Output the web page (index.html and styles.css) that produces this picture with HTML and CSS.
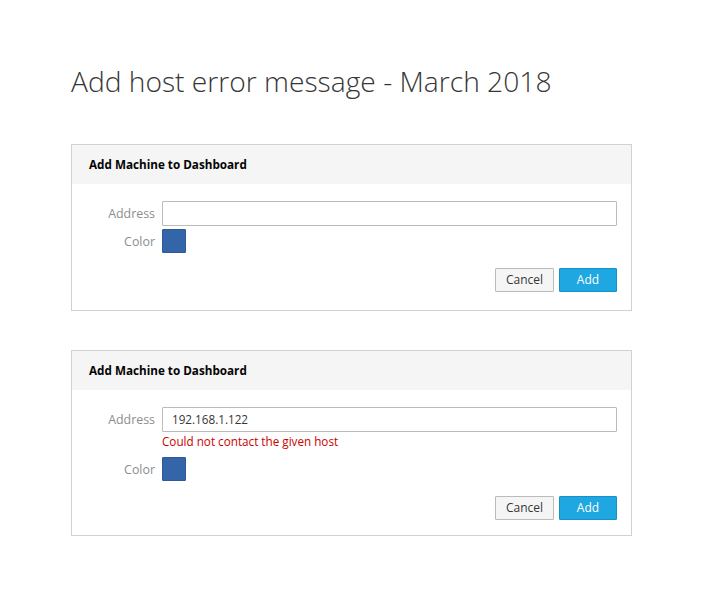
FILE: index.html
```html
<!DOCTYPE html>
<html>
<head>
<meta charset="utf-8">
<link rel="stylesheet" href="styles.css">
</head>
<body>
<main class="page">
  <h1 class="title">Add host error message - March 2018</h1>

  <section class="card">
    <header class="card-head">Add Machine to Dashboard</header>
    <div class="card-body">
      <div class="form">
        <label class="label">Address</label>
        <div class="field"><div class="input"></div></div>
        <label class="label">Color</label>
        <div class="field"><div class="swatch"></div></div>
      </div>
      <div class="actions">
        <button class="btn btn-default">Cancel</button>
        <button class="btn btn-primary">Add</button>
      </div>
    </div>
  </section>

  <section class="card">
    <header class="card-head">Add Machine to Dashboard</header>
    <div class="card-body card-body-tight">
      <div class="form">
        <label class="label">Address</label>
        <div class="field">
          <div class="input">192.168.1.122</div>
          <div class="error">Could not contact the given host</div>
        </div>
        <label class="label label-swatch">Color</label>
        <div class="field"><div class="swatch"></div></div>
      </div>
      <div class="actions">
        <button class="btn btn-default">Cancel</button>
        <button class="btn btn-primary">Add</button>
      </div>
    </div>
  </section>
</main>
</body>
</html>
```

FILE: styles.css
```css
* { box-sizing: border-box; }
html, body { margin: 0; padding: 0; background: #fff; }
body { font-family: "Open Sans", "Noto Sans", sans-serif; color: #363636; }

.page {
  width: 561px;
  margin-left: 71px;
  padding-top: 61px;
}

.title {
  margin: 0 0 43px 0;
  font-weight: 300;
  font-size: 28.2px;
  line-height: 40px;
  color: #363636;
}

.card {
  border: 1px solid #d1d1d1;
  margin-bottom: 39px;
}

.card-head {
  background: #f5f5f5;
  height: 39px;
  padding-left: 17px;
  font-size: 11.7px;
  font-weight: 700;
  line-height: 39px;
  color: #030303;
}

.card-body {
  padding: 17px 14px 18px 17px;
}
.card-body-tight { padding-bottom: 15px; }

.form {
  display: grid;
  grid-template-columns: 66px 1fr;
  column-gap: 7px;
  row-gap: 3px;
}

.label {
  text-align: right;
  font-size: 12.4px;
  line-height: 25px;
  color: #8b8d8f;
}
.label-swatch { line-height: 25px; }

.input {
  height: 25px;
  border: 1px solid #bbbbbb;
  border-radius: 1px;
  padding: 0 9px;
  font-size: 11.7px;
  line-height: 23px;
  color: #363636;
}

.error {
  padding: 1px 0 4px;
  font-size: 11.7px;
  line-height: 17px;
  color: #cc0000;
}

.swatch {
  width: 24px;
  height: 24px;
  background: #3465a8;
  border: 1px solid #2c5a99;
  border-radius: 1px;
}

.actions {
  display: flex;
  justify-content: flex-end;
  gap: 5px;
  margin-top: 14px;
}

.btn {
  height: 24px;
  padding: 0 10px;
  font-family: "Open Sans", "Noto Sans", sans-serif;
  font-size: 12px;
  line-height: 22px;
  border-radius: 1px;
}

.btn-default {
  width: 59px;
  background: #f5f5f5;
  border: 1px solid #bbbbbb;
  color: #363636;
}

.btn-primary {
  width: 58px;
  background: #1ea7e1;
  border: 1px solid #1a8fc4;
  color: #fff;
}
```
